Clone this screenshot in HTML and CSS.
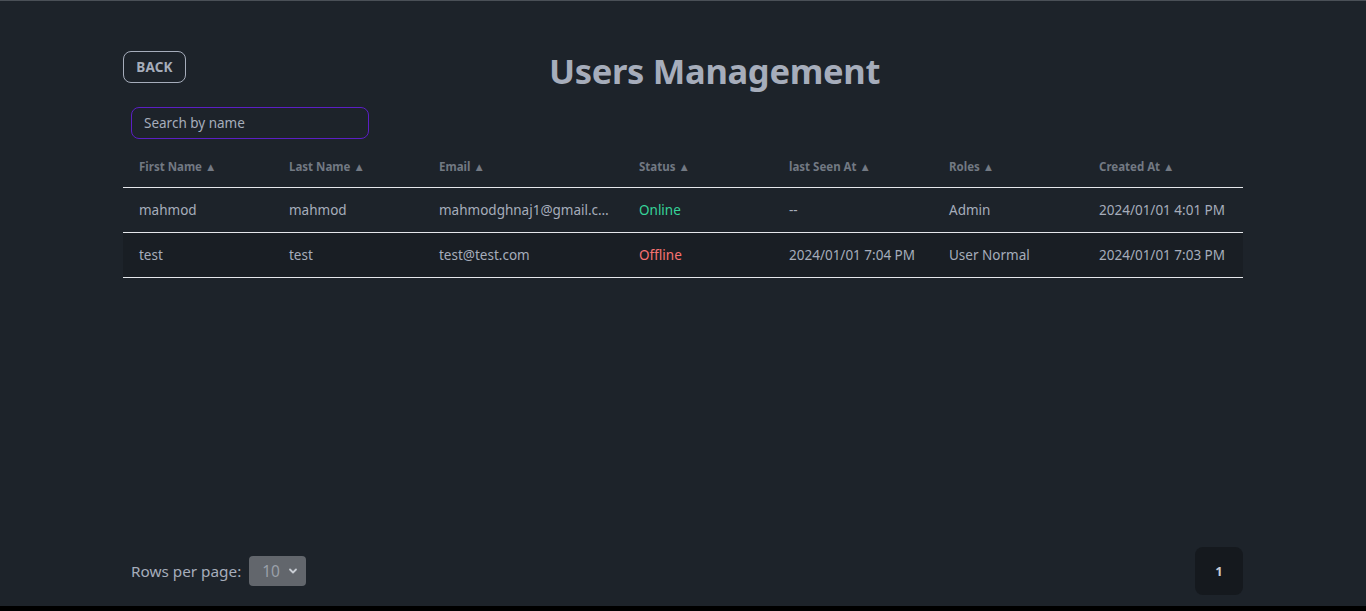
FILE: index.html
```html
<!DOCTYPE html>
<html lang="en">
<head>
<meta charset="utf-8">
<title>Users Management</title>
<link rel="stylesheet" href="styles.css">
</head>
<body>
<div class="page">
  <div class="top">
    <button class="back">Back</button>
    <h1 class="title">Users Management</h1>
  </div>
  <div class="search-wrap">
    <input class="search" type="text" placeholder="Search by name">
  </div>
  <table class="users">
    <colgroup>
      <col class="c150"><col class="c150"><col class="c200"><col class="c150"><col class="c160"><col class="c150"><col>
    </colgroup>
    <thead>
      <tr>
        <th>First Name ▲</th>
        <th>Last Name ▲</th>
        <th>Email ▲</th>
        <th>Status ▲</th>
        <th>last Seen At ▲</th>
        <th>Roles ▲</th>
        <th>Created At ▲</th>
      </tr>
    </thead>
    <tbody>
      <tr>
        <td>mahmod</td>
        <td>mahmod</td>
        <td class="trunc">mahmodghnaj1@gmail.com</td>
        <td class="online">Online</td>
        <td>--</td>
        <td>Admin</td>
        <td>2024/01/01 4:01 PM</td>
      </tr>
      <tr class="alt">
        <td>test</td>
        <td>test</td>
        <td class="trunc">test@test.com</td>
        <td class="offline">Offline</td>
        <td>2024/01/01 7:04 PM</td>
        <td>User Normal</td>
        <td>2024/01/01 7:03 PM</td>
      </tr>
    </tbody>
  </table>
  <div class="footer">
    <div class="rows">
      <span>Rows per page:</span>
      <div class="select">
        <span>10</span>
        <svg class="chev" width="10" height="10" viewBox="0 0 10 10"><path d="M2 3.5 L5 6.5 L8 3.5" fill="none" stroke="#c9cdd4" stroke-width="1.8" stroke-linecap="round" stroke-linejoin="round"/></svg>
      </div>
    </div>
    <button class="pg">1</button>
  </div>
</div>
</body>
</html>
```

FILE: styles.css
```css
* { box-sizing: border-box; }
html, body { margin: 0; padding: 0; background: #000; }
body {
  font-family: "Noto Sans", "Open Sans", sans-serif;
  color: #a6adbb;
}
.page {
  height: 606px;
  background: #1d232a;
  border-top: 1px solid #4a5057;
  padding: 50px 123px 11px;
  display: flex;
  flex-direction: column;
}
.top {
  display: flex;
  align-items: flex-start;
}
.back {
  height: 32px;
  width: 63px;
  padding: 0;
  background: transparent;
  border: 1px solid #a6adbb;
  border-radius: 8px;
  color: #a6adbb;
  font-family: inherit;
  font-weight: 700;
  font-size: 13.5px;
  text-transform: uppercase;
  letter-spacing: 0.2px;
}
.title {
  flex: 1;
  margin: 0;
  text-align: center;
  font-size: 34.5px;
  line-height: 40px;
  font-weight: 700;
  color: #a6adbb;
  letter-spacing: -0.3px;
}
.search-wrap {
  padding-left: 8px;
  margin-top: 16px;
}
.search {
  width: 238px;
  height: 32px;
  background: #1d232a;
  border: 1px solid #5b1fc4;
  border-radius: 8px;
  padding: 0 12px;
  font-family: inherit;
  font-size: 13.5px;
  color: #a6adbb;
  outline: none;
}
.search::placeholder { color: #a6adbb; }
.users {
  margin-top: 8px;
  width: 1120px;
  border-collapse: collapse;
  table-layout: fixed;
  font-size: 13.5px;
}
.c150 { width: 150px; }
.c160 { width: 160px; }
.c200 { width: 200px; }
.users th {
  text-align: left;
  font-size: 11.5px;
  font-weight: 700;
  color: #727983;
  padding: 12px 16px;
  line-height: 16px;
  border-bottom: 1px solid #e5e7eb;
  white-space: nowrap;
}
.users td {
  padding: 12px 16px;
  line-height: 20px;
  border-bottom: 1px solid #e5e7eb;
  white-space: nowrap;
}
.users td.trunc {
  overflow: hidden;
  text-overflow: ellipsis;
  padding-right: 14px;
}
.users tr.alt td { background: #191e24; }
.online { color: #36d399; }
.offline { color: #f87272; }
.footer {
  margin-top: auto;
  display: flex;
  justify-content: space-between;
  align-items: center;
}
.rows {
  padding-left: 8px;
  display: flex;
  align-items: center;
  gap: 8px;
  font-size: 15.3px;
}
.select {
  width: 57px;
  height: 30px;
  background: #62666c;
  border-radius: 4px;
  display: flex;
  align-items: center;
  justify-content: space-between;
  padding: 0 8px 0 13px;
  color: #9aa0a9;
  font-size: 15.5px;
}
.chev { display: block; }
.pg {
  width: 48px;
  height: 48px;
  border: none;
  border-radius: 8px;
  background: #15191e;
  color: #c8ccd3;
  font-family: inherit;
  font-weight: 700;
  font-size: 13px;
}
```
